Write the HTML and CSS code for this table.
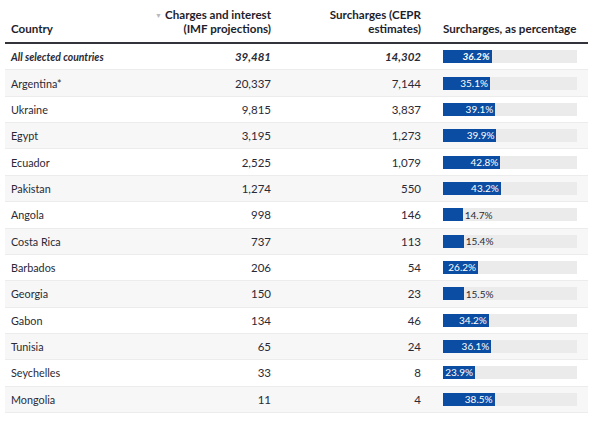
FILE: index.html
```html
<!DOCTYPE html>
<html>
<head>
<meta charset="utf-8">
<link rel="stylesheet" href="styles.css">
</head>
<body>
<div class="table">
  <div class="row head">
    <div class="cell c1">Country</div>
    <div class="cell c2"><span class="title"><span class="sort">▼</span>Charges and interest<br>(IMF projections)</span></div>
    <div class="cell c3">Surcharges (CEPR<br>estimates)</div>
    <div class="cell c4">Surcharges, as percentage</div>
  </div>
  <div class="row total">
    <div class="cell c1">All selected countries</div>
    <div class="cell c2">39,481</div>
    <div class="cell c3">14,302</div>
    <div class="cell c4"><div class="track"><div class="bar in" style="width:36.2%">36.2%</div></div></div>
  </div>
  <div class="row alt">
    <div class="cell c1">Argentina*</div>
    <div class="cell c2">20,337</div>
    <div class="cell c3">7,144</div>
    <div class="cell c4"><div class="track"><div class="bar in" style="width:35.1%">35.1%</div></div></div>
  </div>
  <div class="row">
    <div class="cell c1">Ukraine</div>
    <div class="cell c2">9,815</div>
    <div class="cell c3">3,837</div>
    <div class="cell c4"><div class="track"><div class="bar in" style="width:39.1%">39.1%</div></div></div>
  </div>
  <div class="row alt">
    <div class="cell c1">Egypt</div>
    <div class="cell c2">3,195</div>
    <div class="cell c3">1,273</div>
    <div class="cell c4"><div class="track"><div class="bar in" style="width:39.9%">39.9%</div></div></div>
  </div>
  <div class="row">
    <div class="cell c1">Ecuador</div>
    <div class="cell c2">2,525</div>
    <div class="cell c3">1,079</div>
    <div class="cell c4"><div class="track"><div class="bar in" style="width:42.8%">42.8%</div></div></div>
  </div>
  <div class="row alt">
    <div class="cell c1">Pakistan</div>
    <div class="cell c2">1,274</div>
    <div class="cell c3">550</div>
    <div class="cell c4"><div class="track"><div class="bar in" style="width:43.2%">43.2%</div></div></div>
  </div>
  <div class="row">
    <div class="cell c1">Angola</div>
    <div class="cell c2">998</div>
    <div class="cell c3">146</div>
    <div class="cell c4"><div class="track"><div class="bar" style="width:14.7%"></div><span class="out">14.7%</span></div></div>
  </div>
  <div class="row alt">
    <div class="cell c1">Costa Rica</div>
    <div class="cell c2">737</div>
    <div class="cell c3">113</div>
    <div class="cell c4"><div class="track"><div class="bar" style="width:15.4%"></div><span class="out">15.4%</span></div></div>
  </div>
  <div class="row">
    <div class="cell c1">Barbados</div>
    <div class="cell c2">206</div>
    <div class="cell c3">54</div>
    <div class="cell c4"><div class="track"><div class="bar in" style="width:26.2%">26.2%</div></div></div>
  </div>
  <div class="row alt">
    <div class="cell c1">Georgia</div>
    <div class="cell c2">150</div>
    <div class="cell c3">23</div>
    <div class="cell c4"><div class="track"><div class="bar" style="width:15.5%"></div><span class="out">15.5%</span></div></div>
  </div>
  <div class="row">
    <div class="cell c1">Gabon</div>
    <div class="cell c2">134</div>
    <div class="cell c3">46</div>
    <div class="cell c4"><div class="track"><div class="bar in" style="width:34.2%">34.2%</div></div></div>
  </div>
  <div class="row alt">
    <div class="cell c1">Tunisia</div>
    <div class="cell c2">65</div>
    <div class="cell c3">24</div>
    <div class="cell c4"><div class="track"><div class="bar in" style="width:36.1%">36.1%</div></div></div>
  </div>
  <div class="row">
    <div class="cell c1">Seychelles</div>
    <div class="cell c2">33</div>
    <div class="cell c3">8</div>
    <div class="cell c4"><div class="track"><div class="bar in" style="width:23.9%">23.9%</div></div></div>
  </div>
  <div class="row alt">
    <div class="cell c1">Mongolia</div>
    <div class="cell c2">11</div>
    <div class="cell c3">4</div>
    <div class="cell c4"><div class="track"><div class="bar in" style="width:38.5%">38.5%</div></div></div>
  </div>
</div>
</body>
</html>
```

FILE: styles.css
```css
html, body {
  margin: 0;
  padding: 0;
  background: #ffffff;
}
body {
  font-family: Lato, "Open Sans", sans-serif;
  color: #2a2a36;
  font-size: 11.5px;
}
.table {
  margin-left: 5px;
  width: 583px;
}
.row {
  display: grid;
  grid-template-columns: 150px 122px 150px 161px;
  height: 26.36px;
  box-sizing: border-box;
  border-bottom: 1px solid #ececec;
  align-items: center;
}
.row.alt {
  background: #f7f7f7;
}
.row.head {
  height: 44px;
  border-bottom: 2px solid #33333b;
  align-items: end;
  padding-bottom: 6px;
  font-weight: 700;
  font-size: 11.6px;
  line-height: 14px;
  color: #1e1e2c;
}
.cell {
  padding: 0 6px;
  white-space: nowrap;
}
.row .c1 {
  font-size: 10.8px;
}
.row.head .c1 {
  font-size: 11.6px;
}
.c2, .c3 {
  text-align: right;
}
.c4 {
  padding-left: 16px;
}
.title {
  position: relative;
  display: inline-block;
}
.sort {
  position: absolute;
  left: -10px;
  top: 4px;
  color: #b8b8c0;
  font-size: 7px;
  line-height: 7px;
}
.total {
  font-weight: 700;
  font-style: italic;
}
.row.total .c1 {
  font-size: 10.4px;
}
.track {
  position: relative;
  width: 134px;
  height: 13px;
  background: #ebebeb;
  display: flex;
  align-items: center;
}
.bar {
  height: 100%;
  background: #0b4da2;
  box-sizing: border-box;
}
.bar.in {
  color: #ffffff;
  font-size: 10px;
  line-height: 13px;
  text-align: right;
  padding-right: 2px;
}
.out {
  font-size: 10px;
  margin-left: 2px;
  color: #2a2a36;
}
.total .bar.in {
  font-weight: 700;
}
```
